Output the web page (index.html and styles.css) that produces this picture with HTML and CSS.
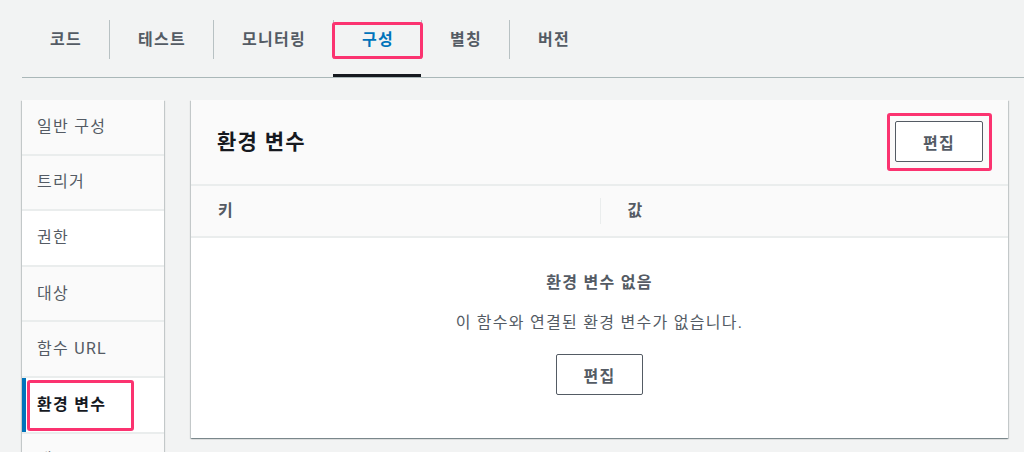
FILE: index.html
```html
<!DOCTYPE html>
<html lang="ko">
<head>
<meta charset="utf-8">
<title>구성 - 환경 변수</title>
<link rel="stylesheet" href="styles.css">
</head>
<body>
<div class="tabs">
  <div class="tab"><span class="tab-label">코드</span></div>
  <div class="tab"><span class="tab-label">테스트</span></div>
  <div class="tab"><span class="tab-label">모니터링</span></div>
  <div class="tab active"><span class="tab-label callout-tab">구성</span></div>
  <div class="tab"><span class="tab-label">별칭</span></div>
  <div class="tab"><span class="tab-label">버전</span></div>
</div>

<div class="layout">
  <nav class="sidenav">
    <div class="nav-item">일반 구성</div>
    <div class="nav-item">트리거</div>
    <div class="nav-item white">권한</div>
    <div class="nav-item">대상</div>
    <div class="nav-item">함수 URL</div>
    <div class="nav-item active">환경 변수</div>
    <div class="nav-item">태그</div>
  </nav>

  <section class="panel">
    <header class="panel-header">
      <h2 class="panel-title">환경 변수</h2>
      <span class="callout-btn"><button class="btn">편집</button></span>
    </header>
    <div class="table-head">
      <div class="th">키</div>
      <div class="th th-divided">값</div>
    </div>
    <div class="empty">
      <div class="empty-title">환경 변수 없음</div>
      <div class="empty-desc">이 함수와 연결된 환경 변수가 없습니다.</div>
      <button class="btn">편집</button>
    </div>
  </section>
</div>
</body>
</html>
```

FILE: styles.css
```css
* { box-sizing: border-box; }

html, body {
  margin: 0;
  padding: 0;
}

body {
  background: #f2f3f3;
  font-family: "Roboto", "Noto Sans CJK KR", sans-serif;
  letter-spacing: 0.08em;
  color: #16191f;
  overflow: hidden;
  height: 452px;
}

/* ---------- Tabs ---------- */
.tabs {
  display: flex;
  margin-left: 22px;
  padding-top: 20px;
  border-bottom: 1px solid #aab7b8;
}

.tab {
  padding-bottom: 15px;
  border-bottom: 3px solid transparent;
}

.tab.active {
  border-bottom-color: #16191f;
}

.tab-label {
  display: block;
  padding: 0 27px 0 28px;
  line-height: 39px;
  height: 39px;
  font-size: 16px;
  font-weight: 700;
  color: #545b64;
}

.tab + .tab .tab-label {
  border-left: 1px solid #b8c1c3;
}

.tab.active .tab-label {
  color: #0073bb;
}

.callout-tab {
  position: relative;
}

.callout-tab::after {
  content: "";
  position: absolute;
  left: -2px;
  right: -2px;
  top: 2px;
  bottom: 0;
  border: 3px solid #fb3370;
  border-radius: 3px;
}

/* ---------- Layout ---------- */
.layout {
  display: grid;
  grid-template-columns: 142px 817px;
  column-gap: 27px;
  margin: 22px 0 0 22px;
  align-items: start;
}

/* ---------- Side navigation ---------- */
.sidenav {
  background: #fafafa;
  box-shadow: 0 1px 1px 0 rgba(0, 28, 36, 0.3),
              1px 1px 1px 0 rgba(0, 28, 36, 0.15),
              -1px 1px 1px 0 rgba(0, 28, 36, 0.15);
}

.nav-item {
  display: flex;
  align-items: center;
  height: 55.6px;
  padding-left: 15px;
  border-bottom: 2px solid #eaeded;
  background: #fafafa;
  font-size: 16px;
  line-height: 22px;
  color: #545b64;
}

.nav-item.white {
  background: #ffffff;
}

.nav-item.active {
  position: relative;
  background: #ffffff;
  font-weight: 700;
  color: #16191f;
  box-shadow: inset 4px 0 0 #0073bb;
}

.nav-item.active::after {
  content: "";
  position: absolute;
  left: 5px;
  top: 2px;
  width: 101px;
  height: 45px;
  border: 3px solid #fb3370;
  border-radius: 3px;
}

/* ---------- Panel ---------- */
.panel {
  background: #ffffff;
  box-shadow: 0 1px 1px 0 rgba(0, 28, 36, 0.3),
              1px 1px 1px 0 rgba(0, 28, 36, 0.15),
              -1px 1px 1px 0 rgba(0, 28, 36, 0.15);
}

.panel-header {
  display: flex;
  justify-content: space-between;
  align-items: center;
  padding: 21px 25px 22px 26px;
  background: #fafafa;
  border-bottom: 2px solid #eaeded;
}

.panel-title {
  margin: 0;
  font-size: 21px;
  line-height: 24px;
  font-weight: 700;
  color: #16191f;
}

.btn {
  width: 88px;
  height: 41px;
  padding: 0;
  border: 1px solid #545b64;
  border-radius: 2px;
  background: #ffffff;
  font-family: inherit;
  font-size: 16px;
  font-weight: 700;
  letter-spacing: 0.08em;
  color: #545b64;
  cursor: pointer;
}

.callout-btn {
  position: relative;
  display: block;
  line-height: 0;
}

.callout-btn::after {
  content: "";
  position: absolute;
  left: -8px;
  top: -8px;
  right: -9px;
  bottom: -9px;
  border: 3px solid #fb3370;
  border-radius: 3px;
}

/* ---------- Table head ---------- */
.table-head {
  display: grid;
  grid-template-columns: 1fr 1fr;
  padding: 12px 0;
  background: #fafafa;
  border-bottom: 2px solid #eaeded;
}

.th {
  height: 26px;
  line-height: 26px;
  padding-left: 27px;
  font-size: 16px;
  font-weight: 700;
  color: #545b64;
}

.th-divided {
  border-left: 1px solid #eaeded;
}

/* ---------- Empty state ---------- */
.empty {
  display: flex;
  flex-direction: column;
  align-items: center;
  padding: 33px 0 43px;
  text-align: center;
}

.empty-title {
  font-size: 16px;
  line-height: 24px;
  font-weight: 700;
  color: #545b64;
}

.empty-desc {
  margin-top: 16px;
  font-size: 16px;
  line-height: 24px;
  color: #545b64;
}

.empty .btn {
  margin-top: 19px;
  width: 87px;
}
```
